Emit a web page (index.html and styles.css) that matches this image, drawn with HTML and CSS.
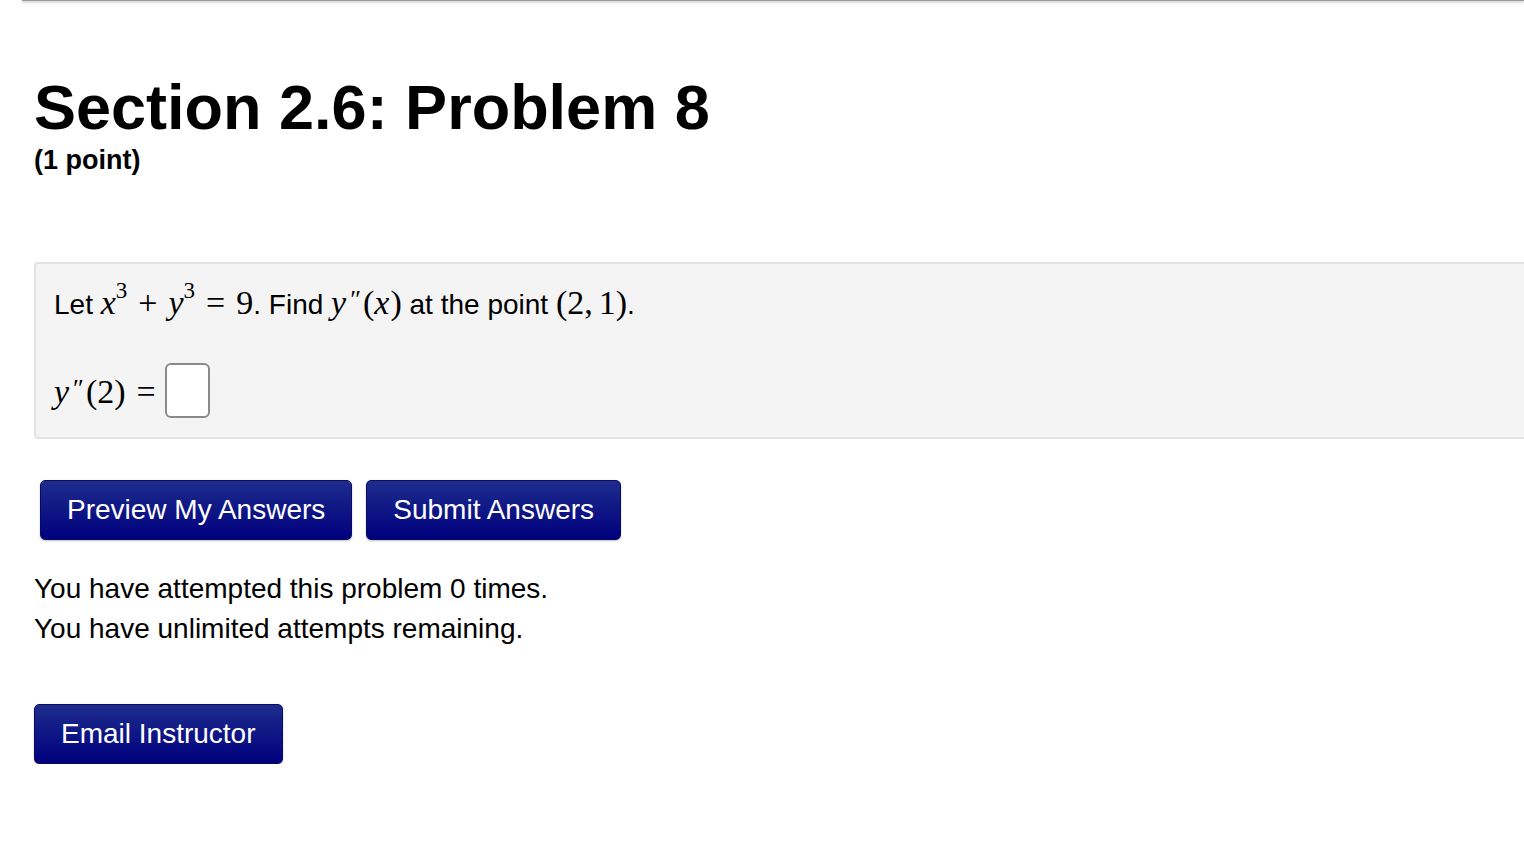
FILE: index.html
```html
<!DOCTYPE html>
<html lang="en">

<head>
    <meta charset="UTF-8">
    <meta name="viewport" content="width=device-width, initial-scale=1.0">
    <title>Section 2.6: Problem 8</title>
    <!-- page styles -->
    <link rel="stylesheet" href="styles.css">
</head>

<body>
    <!-- edge of the nav bar above -->
    <div class="topbar"></div>

    <!-- main content -->
    <div id="content">
        <h1 class="title">Section 2.6: Problem 8</h1>
        <div class="points">(1 point)</div>

        <!-- problem body -->
        <div class="problem">
            <p class="statement">
                Let
                <span class="math"><i>x</i><sup>3</sup><span class="op">+</span><i>y</i><sup>3</sup><span class="op">=</span>9</span>. Find
                <span class="math"><i>y</i><span class="prime">″</span>(<i>x</i>)</span>
                at the point
                <span class="math">(2,<span class="thin"></span>1)</span>.
            </p>
            <div class="answer-row">
                <span class="math"><i>y</i><span class="prime">″</span>(2)<span class="op">=</span></span>
                <input class="answer" type="text">
            </div>
        </div>

        <!-- submit buttons -->
        <div class="buttons">
            <button class="btn">Preview My Answers</button>
            <button class="btn">Submit Answers</button>
        </div>

        <!-- attempt info -->
        <div class="attempts">
            <p>You have attempted this problem 0 times.</p>
            <p>You have unlimited attempts remaining.</p>
        </div>

        <button class="btn email">Email Instructor</button>
    </div>
</body>

</html>
```

FILE: styles.css
```css
/* page base */
html {
    overflow-x: hidden;
}

body {
    font-family: "Liberation Sans", Arial, Helvetica, sans-serif;
    font-size: 28px;
    color: #000;
    background: #fff;
    margin: 0;
    padding: 0;
}

/* shadow of the nav bar */
.topbar {
    height: 1px;
    margin-left: 22px;
    background: #9a9a9a;
    box-shadow: 0 1px 3px rgba(0, 0, 0, 0.45);
}

#content {
    padding: 69px 0 0 34px;
}

/* headings */
.title {
    font-size: 63px;
    line-height: 74px;
    font-weight: bold;
    margin: 0;
}

.points {
    font-size: 27px;
    line-height: 32px;
    font-weight: bold;
}

/* problem box */
.problem {
    margin: 86px -30px 0 0;
    padding: 16px 18px 19px;
    background: #f4f4f4;
    border: 2px solid #e2e2e2;
    border-radius: 4px 0 0 4px;
}

.statement {
    margin: 0;
    line-height: 40px;
}

.answer-row {
    display: flex;
    align-items: center;
    margin-top: 38px;
    line-height: 40px;
}

/* math in serif, like the tex output */
.math {
    font-family: "Liberation Serif", "Times New Roman", serif;
    font-size: 34px;
}

.math i {
    font-style: italic;
    margin-right: 1px;
}

.math sup {
    font-size: 23px;
    line-height: 0;
    vertical-align: 16px;
    margin-left: -1px;
}

.op {
    margin: 0 11px;
}

.prime {
    font-size: 26px;
    vertical-align: 6px;
    margin: 0 2px 0 3px;
}

.thin {
    margin-right: 6px;
}

.answer {
    width: 45px;
    height: 55px;
    box-sizing: border-box;
    margin-left: -2px;
    border: 2px solid #8a8a8a;
    border-radius: 6px;
    background: #fff;
    padding: 0;
}

/* buttons */
.buttons {
    display: flex;
    gap: 14px;
    margin: 41px 0 0 6px;
}

.btn {
    font-family: "Liberation Sans", Arial, Helvetica, sans-serif;
    font-size: 28px;
    color: #fff;
    height: 60px;
    padding: 0 26px;
    background: linear-gradient(#1d2c8c, #00007e);
    border: 1px solid #0b0b5e;
    border-radius: 5px;
    box-shadow: 0 1px 2px rgba(0, 0, 0, 0.25);
    cursor: pointer;
}

/* attempts text */
.attempts {
    margin-top: 29px;
}

.attempts p {
    margin: 0;
    line-height: 40px;
}

.email {
    margin-top: 55px;
}
```
